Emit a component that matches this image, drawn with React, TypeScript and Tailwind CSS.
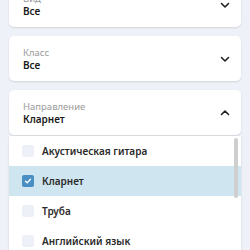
import React from 'react';

function Chevron({ up }: { up?: boolean }) {
  return (
    <svg width="12" height="12" viewBox="0 0 12 12" className="shrink-0">
      <path
        d={up ? 'M2.5 7.5 L6 4 L9.5 7.5' : 'M2.5 4.5 L6 8 L9.5 4.5'}
        fill="none"
        stroke="#222"
        strokeWidth="1.6"
        strokeLinecap="round"
        strokeLinejoin="round"
      />
    </svg>
  );
}

function SelectCard({ label, value, open }: { label: string; value: string; open?: boolean }) {
  return (
    <div className="h-[45px] bg-white rounded-[5px] shadow-[0_1px_2px_rgba(0,0,0,0.12)] flex items-center pl-[14px] pr-[10px]">
      <div className="flex-1 flex flex-col">
        <span className="text-[9.5px] leading-[12px] text-[#9a9a9a]">{label}</span>
        <span className="text-[10px] leading-[12px] text-[#1a1a1a] font-semibold">{value}</span>
      </div>
      <Chevron up={open} />
    </div>
  );
}

const options = [
  { name: 'Акустическая гитара', checked: false },
  { name: 'Кларнет', checked: true },
  { name: 'Труба', checked: false },
  { name: 'Английский язык', checked: false },
];

export default function App() {
  return (
    <div
      className="w-[250px] h-[250px] overflow-hidden bg-[#eef2f8] px-[9px]"
      style={{ fontFamily: '"Noto Sans", "Open Sans", sans-serif' }}
    >
      <div className="flex flex-col gap-[9px] mt-[-18px]">
        <SelectCard label="Вид" value="Все" />
        <SelectCard label="Класс" value="Все" />
        <div className="flex flex-col gap-[1px]">
          <SelectCard label="Направление" value="Кларнет" open />
          <div className="relative bg-white shadow-[0_1px_2px_rgba(0,0,0,0.12)]">
            {options.map((o) => (
              <div
                key={o.name}
                className={`h-[30px] flex items-center pl-[13px] gap-[8px] ${o.checked ? 'bg-[#cfe5f0]' : ''}`}
              >
                {o.checked ? (
                  <div className="w-[12px] h-[12px] rounded-[2px] bg-[#4a8fc4] flex items-center justify-center">
                    <svg width="8" height="8" viewBox="0 0 8 8">
                      <path d="M1.5 4.2 L3.2 5.8 L6.5 2.3" fill="none" stroke="white" strokeWidth="1.3" strokeLinecap="round" strokeLinejoin="round" />
                    </svg>
                  </div>
                ) : (
                  <div className="w-[12px] h-[12px] rounded-[2px] bg-[#edf1f7]" />
                )}
                <span className="text-[10px] font-semibold text-[#2a2a2a]">{o.name}</span>
              </div>
            ))}
            <div className="absolute right-[3px] top-[2px] w-[4px] h-[60px] rounded-full bg-[#cfcfcf]" />
          </div>
        </div>
      </div>
    </div>
  );
}
